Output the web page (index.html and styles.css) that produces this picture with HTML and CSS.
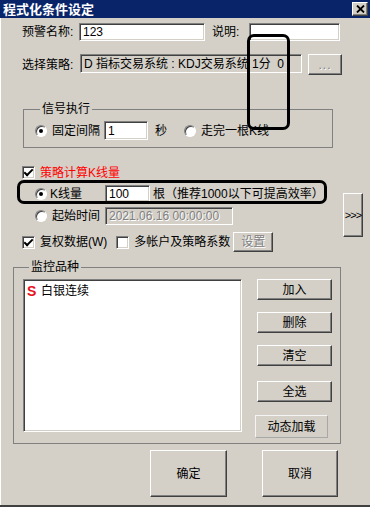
FILE: index.html
```html
<!DOCTYPE html>
<html lang="zh-CN">
<head>
  <meta charset="UTF-8"/>
  <title>程式化条件设定</title>
  <link rel="stylesheet" href="styles.css">
</head>
<body>
<div class="dialog">
  <div class="titlebar">
    <span class="title">程式化条件设定</span>
    <span class="close">
      <svg width="9" height="8" viewBox="0 0 9 8"><path d="M1 0.5L8 7.5M8 0.5L1 7.5" stroke="#000" stroke-width="1.8"/></svg>
    </span>
  </div>

  <div class="row row-name">
    <span class="lbl lbl-name">预警名称:</span>
    <span class="edit edit-name">123</span>
    <span class="lbl lbl-desc">说明:</span>
    <span class="edit edit-desc"></span>
  </div>

  <div class="row row-strategy">
    <span class="lbl lbl-strategy">选择策略:</span>
    <span class="field field-strategy">D 指标交易系统 : KDJ交易系统 1分  0</span>
    <span class="btn btn-more">...</span>
  </div>

  <fieldset class="group group-signal">
    <legend>信号执行</legend>
    <div class="row row-signal">
      <span class="radio on"></span><span class="opt">固定间隔</span>
      <span class="edit edit-sec">1</span><span class="unit">秒</span>
      <span class="radio radio-bar"></span><span class="opt">走完一根K线</span>
    </div>
  </fieldset>

  <div class="calc">
    <div class="calc-main">
      <div class="row row-check">
        <span class="check on"></span><span class="red">策略计算K线量</span>
      </div>
      <div class="row row-bars">
        <span class="radio on"></span><span class="opt opt-bars">K线量</span>
        <span class="edit edit-bars">100</span>
        <span class="hint">根（推荐1000以下可提高效率）</span>
      </div>
      <div class="row row-start">
        <span class="radio"></span><span class="opt opt-start">起始时间</span>
        <span class="field field-date">2021.06.16 00:00:00</span>
      </div>
      <div class="row row-adj">
        <span class="check on"></span><span class="opt">复权数据(W)</span>
        <span class="check check-multi"></span><span class="opt">多帐户及策略系数</span>
        <span class="btn btn-set">设置</span>
      </div>
    </div>
    <span class="btn btn-expand">&gt;&gt;&gt;</span>
  </div>

  <fieldset class="group group-watch">
    <legend>监控品种</legend>
    <div class="watch">
      <div class="listbox">
        <div class="item"><span class="s-mark">S</span>白银连续</div>
      </div>
      <div class="side">
        <span class="btn side-btn">加入</span>
        <span class="btn side-btn">删除</span>
        <span class="btn side-btn">清空</span>
        <span class="btn side-btn btn-all">全选</span>
        <span class="btn-flat">动态加载</span>
      </div>
    </div>
  </fieldset>

  <div class="actions">
    <span class="btn btn-ok">确定</span>
    <span class="btn btn-cancel">取消</span>
  </div>

  <div class="mark mark-strategy"></div>
  <div class="mark mark-bars"></div>
</div>
</body>
</html>
```

FILE: styles.css
```css
* {
  box-sizing: border-box;
}
body {
  margin: 0;
  background-color: #d4d0c8;
  font-family: "Liberation Sans", "Noto Sans CJK SC", sans-serif;
  font-size: 12px;
  line-height: 14px;
  color: #000;
}
.dialog {
  position: relative;
  width: 370px;
  height: 507px;
  overflow: hidden;
  background-color: #d4d0c8;
  border-bottom: 2px solid #404040;
  box-shadow: inset 1px 0 0 #fff;
}
.titlebar {
  height: 18px;
  background-color: #0a246a;
  display: flex;
  align-items: center;
  justify-content: space-between;
  padding: 0 2px 0 3px;
}
.title {
  color: #fff;
  font-weight: bold;
  font-size: 13px;
  font-family: "Noto Sans CJK SC", sans-serif;
}
.close {
  width: 16px;
  height: 14px;
  display: flex;
  align-items: center;
  justify-content: center;
  background-color: #d4d0c8;
  border: 1px solid;
  border-color: #fff #404040 #404040 #fff;
  box-shadow: inset -1px -1px 0 #808080;
}
.row {
  display: flex;
  align-items: center;
}
.edit, .field, .listbox {
  border: 1px solid;
  border-color: #808080 #fff #fff #808080;
  box-shadow: inset 1px 1px 0 #404040, inset -1px -1px 0 #d4d0c8;
  display: flex;
  align-items: center;
  padding: 0 3px;
  white-space: pre;
  overflow: hidden;
}
.edit {
  background-color: #fff;
}
.field {
  background-color: #d4d0c8;
}
.btn {
  display: flex;
  align-items: center;
  justify-content: center;
  background-color: #d4d0c8;
  border: 1px solid;
  border-color: #fff #404040 #404040 #fff;
  box-shadow: inset -1px -1px 0 #808080;
  flex: none;
}

/* top rows */
.row-name {
  margin-top: 5px;
  padding-left: 22px;
  height: 18px;
}
.lbl-name {
  width: 57px;
}
.edit-name {
  width: 126px;
  height: 18px;
}
.lbl-desc {
  margin-left: 7px;
  width: 37px;
}
.edit-desc {
  width: 91px;
  height: 18px;
}
.row-strategy {
  margin-top: 13px;
  padding-left: 22px;
  height: 21px;
}
.lbl-strategy {
  width: 58px;
}
.field-strategy {
  width: 222px;
  height: 19px;
  align-self: flex-start;
}
.btn-more {
  margin-left: 6px;
  width: 34px;
  height: 21px;
  color: #808080;
  text-shadow: 1px 1px 0 #fff;
  letter-spacing: 1px;
}

/* group boxes */
.group {
  margin: 0;
  border: 1px solid #808080;
  min-width: 0;
}
.group legend {
  padding: 0 2px;
  line-height: 14px;
}
.group-signal {
  margin: 27px 0 0 23px;
  width: 310px;
  padding: 5px 0 7px 11px;
}
.group-signal legend {
  margin-left: 5px;
}
.row-signal {
  height: 19px;
}
.radio {
  position: relative;
  flex: none;
  width: 12px;
  height: 12px;
  border-radius: 50%;
  background-color: #fff;
  border: 1px solid;
  border-color: #808080 #fff #fff #808080;
  box-shadow: inset 1px 1px 0 #404040;
}
.radio.on::after {
  content: "";
  position: absolute;
  left: 3px;
  top: 3px;
  width: 4px;
  height: 4px;
  border-radius: 50%;
  background-color: #000;
}
.opt {
  margin-left: 5px;
  white-space: nowrap;
}
.edit-sec {
  margin-left: 4px;
  width: 44px;
  height: 19px;
}
.unit {
  margin-left: 7px;
}
.radio-bar {
  margin-left: 17px;
}

/* bar count section */
.calc {
  margin-top: 18px;
  display: flex;
  align-items: flex-start;
}
.calc-main {
  width: 343px;
}
.check {
  position: relative;
  flex: none;
  width: 13px;
  height: 13px;
  background-color: #fff;
  border: 1px solid;
  border-color: #808080 #fff #fff #808080;
  box-shadow: inset 1px 1px 0 #404040, inset -1px -1px 0 #d4d0c8;
}
.check.on::after {
  content: "";
  position: absolute;
  left: 3px;
  top: 0;
  width: 3px;
  height: 7px;
  border: solid #000;
  border-width: 0 2px 2px 0;
  transform: rotate(45deg);
}
.row-check {
  padding-left: 22px;
  height: 13px;
}
.red {
  margin-left: 5px;
  color: #f00;
}
.row-bars {
  margin-top: 6px;
  padding-left: 35px;
  height: 17px;
}
.opt-bars {
  margin-left: 3px;
  width: 55px;
}
.edit-bars {
  width: 45px;
  height: 17px;
}
.hint {
  margin-left: 3px;
  white-space: nowrap;
}
.row-start {
  margin-top: 5px;
  padding-left: 35px;
  height: 18px;
}
.opt-start {
  width: 53px;
}
.field-date {
  width: 128px;
  height: 18px;
  color: #808080;
  text-shadow: 1px 1px 0 #fff;
}
.row-adj {
  margin-top: 7px;
  padding-left: 22px;
  height: 20px;
}
.check-multi {
  margin-left: 9px;
}
.btn-set {
  margin-left: 3px;
  width: 40px;
  height: 20px;
  color: #808080;
  text-shadow: 1px 1px 0 #fff;
}
.btn-expand {
  margin-top: 27px;
  width: 20px;
  height: 44px;
  font-size: 11px;
  letter-spacing: -1px;
}

/* watch list */
.group-watch {
  margin: 8px 0 0 13px;
  width: 328px;
  padding: 5px 0 5px 9px;
}
.group-watch legend {
  margin-left: 6px;
}
.watch {
  display: flex;
  height: 159px;
}
.listbox {
  width: 219px;
  height: 153px;
  background-color: #fff;
  display: block;
  white-space: normal;
  padding: 4px 2px;
}
.item {
  display: flex;
  align-items: center;
  height: 14px;
}
.s-mark {
  color: #e8101c;
  font-weight: bold;
  font-size: 14px;
  width: 15px;
  padding-left: 1px;
}
.side {
  margin-left: 15px;
  width: 75px;
  display: flex;
  flex-direction: column;
}
.side-btn {
  height: 21px;
  margin-bottom: 12px;
}
.btn-all {
  margin-top: 3px;
  margin-bottom: 13px;
}
.btn-flat {
  display: flex;
  align-items: center;
  justify-content: center;
  width: 73px;
  height: 23px;
  margin-left: -2px;
  border: 1px solid;
  border-color: #f4f4f4 #a8a8a8 #a8a8a8 #f4f4f4;
}

/* bottom buttons */
.actions {
  margin-top: 6px;
  padding-left: 150px;
  display: flex;
}
.btn-ok {
  width: 77px;
  height: 47px;
}
.btn-cancel {
  margin-left: 35px;
  width: 76px;
  height: 47px;
}

/* hand-drawn annotation frames */
.mark {
  position: absolute;
  border: 3px solid #000;
  border-radius: 7px;
}
.mark-strategy {
  left: 247px;
  top: 34px;
  width: 43px;
  height: 96px;
}
.mark-bars {
  left: 17px;
  top: 180px;
  width: 310px;
  height: 24px;
}
```
